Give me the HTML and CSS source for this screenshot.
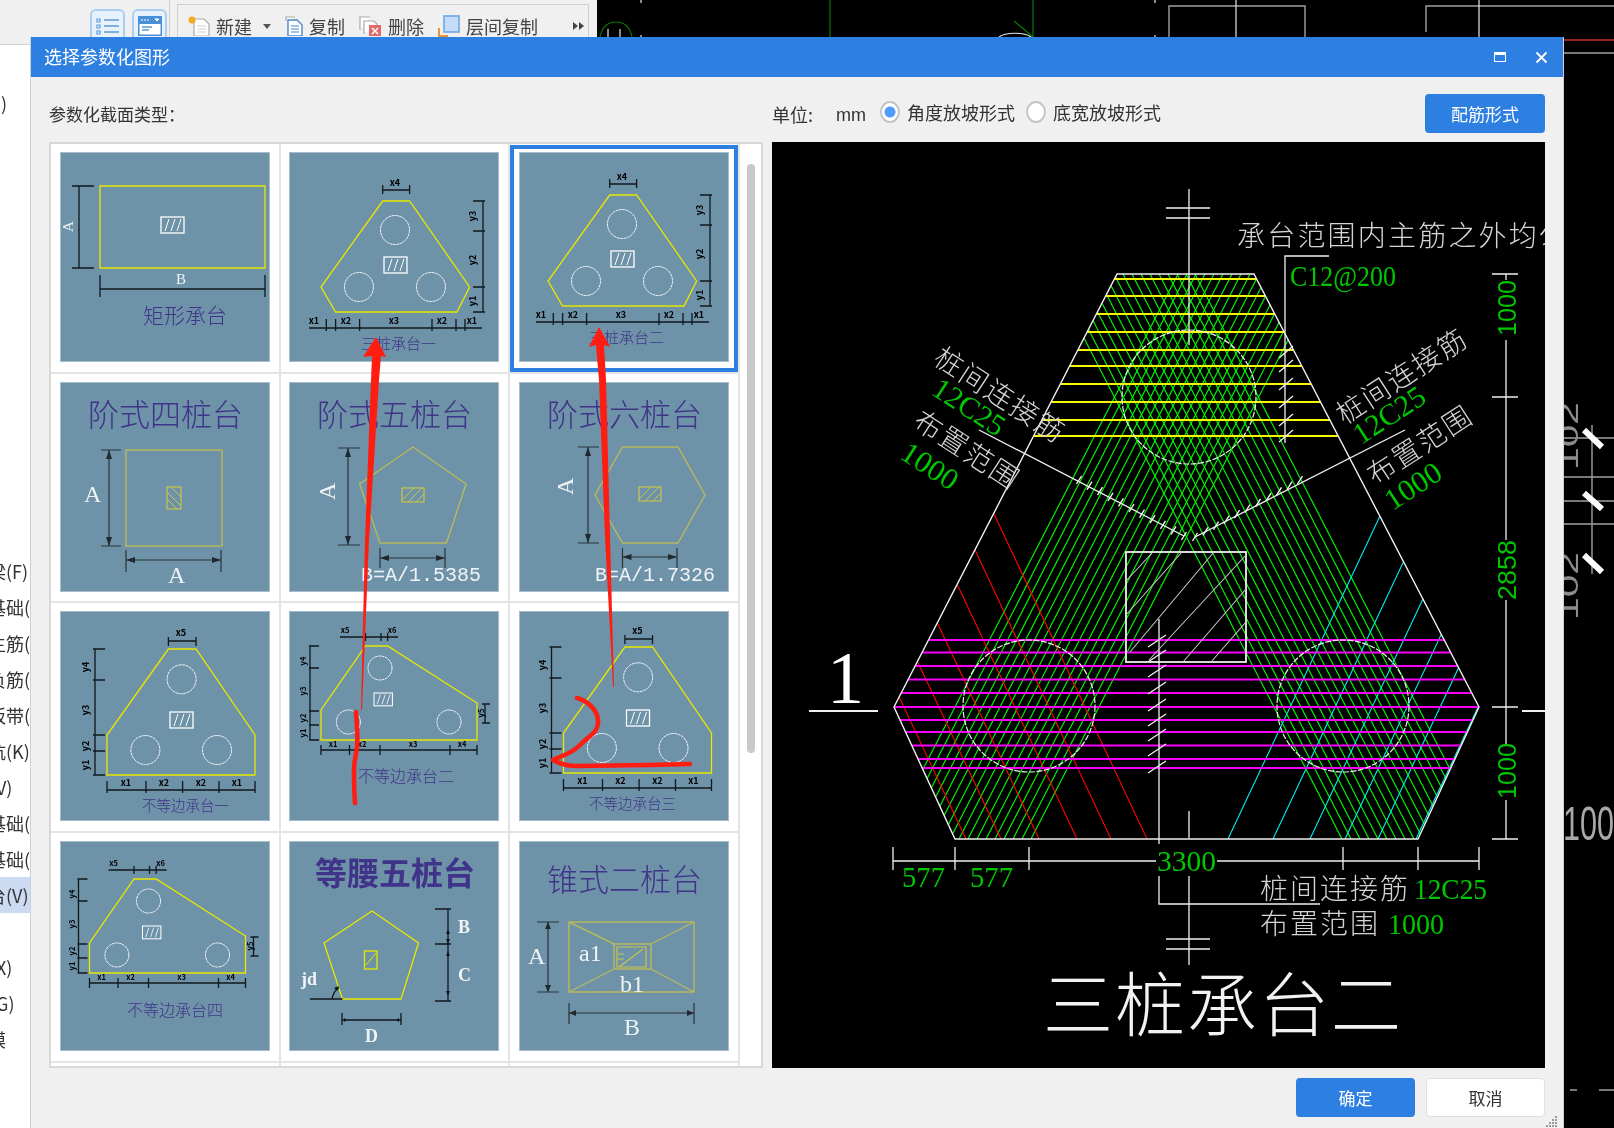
FILE: index.html
```html
<!DOCTYPE html>
<html lang="zh-CN">
  <head>
    <meta charset="UTF-8" />
    <title>选择参数化图形</title>
    <link rel="stylesheet" href="styles.css">
  </head>
  <body>
    <!-- shared parts of the section thumbnails -->
    <svg class="defs" width="0" height="0">
      <defs>
        <g id="hb">
          <rect class="hb" width="23" height="16" />
          <path class="hb-l" d="M4 14l4-12M10 14l4-12M16 14l4-12" />
        </g>
        <g id="tri-a">
          <path class="yl" d="M93.7 49H120.6L180.6 135 168 160H46.6L32 135Z" />
          <circle class="ci" cx="106" cy="78" r="14.5" />
          <circle class="ci" cx="70" cy="135" r="14.5" />
          <circle class="ci" cx="142" cy="135" r="14.5" />
          <use href="#hb" x="95" y="105" />
          <path class="ln" d="M93.7 33v9M120.6 33v9M93.7 38H120.6" />
          <path class="ln" d="M194 49V160M184 49h12M184 79h12M184 135h12M184 160h12" />
          <path class="ln" d="M20 176H193M37.3 167v12M46.6 167v12M70.6 167v12M143 167v12M167 167v12M176 167v12" />
          <text class="sm" x="106" y="34">x4</text>
          <text class="sm" x="25" y="172">x1</text>
          <text class="sm" x="57" y="172">x2</text>
          <text class="sm" x="105" y="172">x3</text>
          <text class="sm" x="153" y="172">x2</text>
          <text class="sm" x="183" y="172">x1</text>
          <text class="sm" x="187" y="64" transform="rotate(-90 187 64)">y3</text>
          <text class="sm" x="187" y="108" transform="rotate(-90 187 108)">y2</text>
          <text class="sm" x="187" y="149" transform="rotate(-90 187 149)">y1</text>
        </g>
        <g id="tri-b">
          <path class="yl" d="M108.4 38H136L195 124V164H47V124Z" />
          <circle class="ci" cx="121.6" cy="68.3" r="14.5" />
          <circle class="ci" cx="85.4" cy="139" r="14.5" />
          <circle class="ci" cx="157" cy="139" r="14.5" />
          <use href="#hb" x="110" y="101" />
          <path class="ln" d="M108.4 26v9M136 26v9M108.4 30H136" />
          <path class="ln" d="M35 38V164M33 38h12M33 69h12M33 124h12M33 140h12M33 164h12" />
          <path class="ln" d="M47 179H195M47 170v12M86 170v12M122.6 170v12M159 170v12M195 170v12" />
          <text class="sm" x="121" y="25">x5</text>
          <text class="sm" x="66" y="175">x1</text>
          <text class="sm" x="104" y="175">x2</text>
          <text class="sm" x="141" y="175">x2</text>
          <text class="sm" x="177" y="175">x1</text>
          <text class="sm" x="29" y="56" transform="rotate(-90 29 56)">y4</text>
          <text class="sm" x="29" y="99" transform="rotate(-90 29 99)">y3</text>
          <text class="sm" x="29" y="135" transform="rotate(-90 29 135)">y2</text>
          <text class="sm" x="29" y="154" transform="rotate(-90 29 154)">y1</text>
        </g>
        <g id="tri-c">
          <path class="yl" d="M76.5 35H98.6L188 92V129H32V99Z" />
          <circle class="ci" cx="91" cy="57" r="12" />
          <circle class="ci" cx="59.4" cy="111" r="12" />
          <circle class="ci" cx="160" cy="111" r="12" />
          <use href="#hb" transform="translate(85 82) scale(.8)" />
          <path class="ln" d="M51 26H109M76.5 22v8M92 22v8M98.6 22v8" />
          <path class="ln" d="M21 35V129M20 35h10M20 57h10M20 100h10M20 114h10M20 129h10" />
          <path class="ln" d="M32 139H188M32 134v10M60.5 134v10M91 134v10M161 134v10M188 134v10" />
          <path class="ln" d="M196 93V112M193 93h8M193 112h8" />
          <text class="xs" x="56" y="22">x5</text>
          <text class="xs" x="103" y="22">x6</text>
          <text class="xs" x="44" y="136">x1</text>
          <text class="xs" x="73" y="136">x2</text>
          <text class="xs" x="124" y="136">x3</text>
          <text class="xs" x="173" y="136">x4</text>
          <text class="xs" x="17" y="50" transform="rotate(-90 17 50)">y4</text>
          <text class="xs" x="17" y="80" transform="rotate(-90 17 80)">y3</text>
          <text class="xs" x="17" y="107" transform="rotate(-90 17 107)">y2</text>
          <text class="xs" x="17" y="122" transform="rotate(-90 17 122)">y1</text>
          <text class="xs" x="195" y="102" transform="rotate(-90 195 102)">y5</text>
        </g>
      </defs>
    </svg>

    <div class="app">
      <aside class="left">
        <div class="tools">
          <div class="tools-a">
            <span class="tbtn">
              <svg width="24" height="18" viewBox="0 0 24 18">
                <path class="ti-b" d="M1 2h3v3H1zM1 8h3v3H1zM1 14h3v3H1z" />
                <path class="ti-l" d="M8 3h15M8 9h15M8 15h15" />
              </svg>
            </span>
            <span class="tbtn">
              <svg width="24" height="20" viewBox="0 0 24 20">
                <rect class="ti-f" width="24" height="20" />
                <rect x="1.5" y="8" width="21" height="10.5" fill="#fff" />
                <path class="ti-w" d="M3 4h2M6 4h2M9 4h2M17 3h4l-2 2z" />
                <path class="ti-l" d="M4 11h10M4 14h7" />
              </svg>
            </span>
          </div>
          <div class="tools-b">
            <span class="tool">
              <svg width="22" height="20" viewBox="0 0 22 20">
                <path class="d-g" d="M6 3h10l5 5v12H6z" />
                <path class="d-l" d="M9 10h9M9 13h9M9 16h9" />
                <circle cx="4" cy="4" r="3.5" fill="#f5a623" />
              </svg>
              <span>新建</span>
              <i class="caret"></i>
            </span>
            <span class="tool">
              <svg width="18" height="20" viewBox="0 0 18 20">
                <path class="d-g" d="M1 5V1h9" />
                <path class="d-b" d="M3 4h9l5 5v11H3z" />
                <path class="d-bl" d="M6 10h8M6 13h8M6 16h8" />
              </svg>
              <span>复制</span>
            </span>
            <span class="tool">
              <svg width="23" height="20" viewBox="0 0 23 20">
                <path class="d-g" d="M1 14V1h10" />
                <path class="d-g" d="M5 18V5h10l3 3v2" />
                <rect x="10" y="9" width="12" height="11" fill="#e46a6a" />
                <path class="d-x" d="M13 12l6 6M19 12l-6 6" />
              </svg>
              <span>删除</span>
            </span>
            <span class="tool">
              <svg width="22" height="22" viewBox="0 0 22 22">
                <path class="d-o" d="M1 13v8h9" />
                <rect class="d-s" x="6" y="1" width="15" height="16" />
              </svg>
              <span>层间复制</span>
            </span>
            <svg class="more" width="11" height="8" viewBox="0 0 11 8"><path d="M0 0l5 4-5 4zM6 0l5 4-5 4z" /></svg>
          </div>
        </div>
        <ul class="nav">
          <li class="short lone">)</li>
          <li>梁(F)</li>
          <li>基础(</li>
          <li>主筋(</li>
          <li>负筋(</li>
          <li>板带(</li>
          <li>抗(K)</li>
          <li class="short">V)</li>
          <li>基础(</li>
          <li>基础(</li>
          <li class="sel">台(V)</li>
          <li class="short blank"></li>
          <li class="short">X)</li>
          <li class="short">G)</li>
          <li>膜</li>
        </ul>
      </aside>

      <!-- CAD model space behind the dialog -->
      <svg class="cad" viewBox="597 0 1017 1128">
        <path class="cad-gr" d="M830 0V37M1033 0V37M1014 21L1033 37" />
        <path class="cad-gr" d="M600 37C602 27 608 22 616 22S630 27 632 37" />
        <path class="cad-w" d="M608 29V37M620 29V37M999 37C1005 32 1025 32 1031 37M641 0V3M641 35V37M1155 0V3M1155 35V37" />
        <path class="cad-g" d="M1169 37V6H1305V37M1426 32V6H1614" />
        <path class="cad-w" d="M1236 0V37M1479 0V37" />
        <path class="cad-r" d="M1564 40H1614" />
        <path class="cad-g" d="M1564 53H1614M1564 438H1614M1564 477H1614M1564 501H1614M1564 524H1614M1592 425V574M1570 1090H1577M1599 1090H1614" />
        <path class="cad-t" d="M1584 430L1602 447M1584 493L1602 509M1584 555L1602 572" />
        <text class="cad-n" x="1578" y="470" transform="rotate(-90 1578 470)" textLength="68" lengthAdjust="spacingAndGlyphs">102</text>
        <text class="cad-n" x="1578" y="620" transform="rotate(-90 1578 620)" textLength="68" lengthAdjust="spacingAndGlyphs">102</text>
        <text class="cad-big" x="1563" y="840" textLength="51" lengthAdjust="spacingAndGlyphs">100</text>
      </svg>

      <section class="dialog">
        <header class="dlg-head">
          <span class="dlg-title">选择参数化图形</span>
          <span class="dlg-btns">
            <i class="ico-max"></i>
            <svg width="13" height="13" viewBox="0 0 13 13"><path class="ico-x" d="M1.5 1.5l10 10M11.5 1.5l-10 10" /></svg>
          </span>
        </header>
        <div class="dlg-body">
          <div class="lbl">参数化截面类型：</div>
          <div class="opts">
            <span class="unit">单位:</span>
            <span class="mm">mm</span>
            <label class="opt"><i class="radio on"></i>角度放坡形式</label>
            <label class="opt"><i class="radio"></i>底宽放坡形式</label>
            <button class="btn blue wide">配筋形式</button>
          </div>

          <div class="list">
            <div class="cells">
              <div class="cell">
                <svg class="thumb" viewBox="0 0 210 210">
                  <path class="yl" d="M40 34H205V116H40Z" />
                  <use href="#hb" x="101" y="65" />
                  <path class="ln" d="M19 34V116M12 34H34M12 116H34M40 123V145M205 123V145M40 137H205" />
                  <text class="lt s13" x="13" y="80" transform="rotate(-90 13 80)">A</text>
                  <text class="lt s13" x="116" y="132">B</text>
                  <text class="cap" x="83" y="171" font-size="21">矩形承台</text>
                </svg>
              </div>
              <div class="cell">
                <svg class="thumb" viewBox="0 0 210 210">
                  <use href="#tri-a" />
                  <text class="cap" x="72" y="197" font-size="15">三桩承台一</text>
                </svg>
              </div>
              <div class="cell pick">
                <svg class="thumb" viewBox="0 0 210 210">
                  <use href="#tri-a" x="-3" y="-6" />
                  <text class="cap" x="70" y="191" font-size="15">三桩承台二</text>
                </svg>
              </div>

              <div class="cell">
                <svg class="thumb" viewBox="0 0 210 210">
                  <text class="cap" x="28" y="44" font-size="31">阶式四桩台</text>
                  <path class="ol" d="M66 68H162V164H66Z" />
                  <rect class="ol2" x="107" y="105" width="14" height="22" />
                  <path class="hat" d="M107 110l14 14M107 117l10 10M111 105l10 10" />
                  <path class="dk" d="M41 68H61M41 164H61M49 68V164M66 168V190M161 168V190M66 178H161" />
                  <path class="ar" d="M49 68l-3 9h6zM49 164l-3-9h6zM66 178l9-3v6zM161 178l-9-3v6z" />
                  <text class="lt s24" x="24" y="120">A</text>
                  <text class="lt s24" x="108" y="201">A</text>
                </svg>
              </div>
              <div class="cell">
                <svg class="thumb" viewBox="0 0 210 210">
                  <text class="cap" x="28" y="44" font-size="31">阶式五桩台</text>
                  <path class="ol" d="M124 65L177 102 157.5 161H91L70.6 102Z" />
                  <rect class="ol2" x="113" y="106" width="22" height="14" />
                  <path class="hat" d="M113 118l12-12M119 120l14-14M127 120l8-8" />
                  <path class="dk" d="M49 66H71M49 163H71M59 66V163M91 166V186M156 166V186M91 176H156" />
                  <path class="ar" d="M59 66l-3 9h6zM59 163l-3-9h6zM91 176l9-3v6zM156 176l-9-3v6z" />
                  <text class="lt s24" x="46" y="118" transform="rotate(-90 46 118)">A</text>
                  <text class="lt mono" x="72" y="199">B=A/1.5385</text>
                </svg>
              </div>
              <div class="cell">
                <svg class="thumb" viewBox="0 0 210 210">
                  <text class="cap" x="28" y="44" font-size="31">阶式六桩台</text>
                  <path class="ol" d="M103.5 65H159L186 113 159 161H103.5L76 113Z" />
                  <rect class="ol2" x="120" y="105" width="22" height="14" />
                  <path class="hat" d="M120 117l12-12M126 119l14-14M134 119l8-8" />
                  <path class="dk" d="M59 65H80M59 161H80M69 65V161M103.5 166V186M158 166V186M103.5 175H158" />
                  <path class="ar" d="M69 65l-3 9h6zM69 161l-3-9h6zM103.5 175l9-3v6zM158 175l-9-3v6z" />
                  <text class="lt s24" x="54" y="113" transform="rotate(-90 54 113)">A</text>
                  <text class="lt mono" x="76" y="199">B=A/1.7326</text>
                </svg>
              </div>

              <div class="cell">
                <svg class="thumb" viewBox="0 0 210 210">
                  <use href="#tri-b" />
                  <text class="cap" x="82" y="200" font-size="14.5">不等边承台一</text>
                </svg>
              </div>
              <div class="cell">
                <svg class="thumb" viewBox="0 0 210 210">
                  <use href="#tri-c" />
                  <text class="cap" x="69" y="171" font-size="16">不等边承台二</text>
                </svg>
              </div>
              <div class="cell">
                <svg class="thumb" viewBox="0 0 210 210">
                  <use href="#tri-b" x="-2.5" y="-2" />
                  <text class="cap" x="70" y="198" font-size="14.5">不等边承台三</text>
                </svg>
              </div>

              <div class="cell">
                <svg class="thumb" viewBox="0 0 210 210">
                  <use href="#tri-c" x="-2.5" y="3" />
                  <text class="cap" x="67" y="175" font-size="16">不等边承台四</text>
                </svg>
              </div>
              <div class="cell">
                <svg class="thumb" viewBox="0 0 210 210">
                  <text class="cap bold" x="26" y="44" font-size="32">等腰五桩台</text>
                  <path class="yl" d="M83 70L129.5 102 112 158H53.5L35 102Z" />
                  <rect class="yl" x="75.5" y="110" width="12.5" height="18" />
                  <path class="yl-t" d="M77 124l10-12" />
                  <path class="ln" d="M146 68H162M146 103H162M146 160H162M159 68V160M21 158H53.5M53 172V184M112 172V184M53 179H112M43 158C44 152 46 149 50 147" />
                  <path class="ar-k" d="M159 88l-2 5h4zM159 103l-2-5h4zM159 110l-2 5h4zM159 155l-2-5h4zM58 179l-3-2v4zM107 179l3-2v4zM50 145l-5 2 3 3z" />
                  <text class="lt b17" x="169" y="92">B</text>
                  <text class="lt b17" x="169" y="140">C</text>
                  <text class="lt b17" x="12" y="144">jd</text>
                  <text class="lt b17" x="76" y="201">D</text>
                </svg>
              </div>
              <div class="cell">
                <svg class="thumb" viewBox="0 0 210 210">
                  <text class="cap" x="28" y="50" font-size="31">锥式二桩台</text>
                  <path class="ol" d="M50 81H175V151H50ZM95 103H132V128H95ZM50 81L95 103M175 81L132 103M50 151L95 128M175 151L132 128" />
                  <path class="ol2" d="M98 106H127V126H98ZM100 126L124 108M99 113h6M99 118h6" />
                  <path class="dk" d="M18 81H40M18 151H40M29 81V151M50 162V183M175 162V183M50 172H175" />
                  <path class="ar" d="M29 81l-3 7h6zM29 151l-3-7h6zM50 172l7-3v6zM175 172l-7-3v6z" />
                  <text class="lt s24" x="9" y="123">A</text>
                  <text class="lt s24" x="60" y="120">a1</text>
                  <text class="lt s24" x="101" y="151">b1</text>
                  <text class="lt s24" x="105" y="194">B</text>
                </svg>
              </div>
              <div class="cell"></div>
              <div class="cell"></div>
              <div class="cell"></div>
            </div>
            <div class="scroll"><div class="scroll-thumb"></div></div>
          </div>

          <div class="preview">
            <svg class="sheet" width="773" height="926" viewBox="772 142 773 926">
              <defs>
                <clipPath id="hex"><path d="M1117 274H1254L1479 707 1418 839H955L894 707Z" /></clipPath>
              </defs>
              <g clip-path="url(#hex)">
                <path class="p-gr" d="M1178 274l-291 565M1187 274l-291 565M1196 274l-291 565M1205 274l-291 565M1214 274l-291 565M1223 274l-291 565M1232 274l-291 565M1241 274l-291 565M1250 274l-291 565M1259 274l-291 565M1268 274l-291 565M1277 274l-291 565M1286 274l-291 565M1295 274l-291 565M1304 274l-291 565M1313 274l-291 565M1322 274l-291 565" />
                <path class="p-gr" d="M1195 274l291 565M1186 274l291 565M1177 274l291 565M1168 274l291 565M1159 274l291 565M1150 274l291 565M1141 274l291 565M1132 274l291 565M1123 274l291 565M1114 274l291 565M1105 274l291 565M1096 274l291 565M1087 274l291 565M1078 274l291 565M1069 274l291 565M1060 274l291 565M1051 274l291 565" />
                <path class="p-re" d="M966 839l-200-425M1001 839l-200-425M1039 839l-200-425M1077 839l-200-425M1111 839l-200-425M1147 839l-200-425" />
                <path class="p-cy" d="M1228 839l200-425M1273 839l200-425M1310 839l200-425M1345 839l200-425M1378 839l200-425M1416 839l200-425" />
                <path class="p-ye" d="M900 279H1500M900 296H1500M900 314H1500M900 332H1500M900 350H1500M900 366H1500M900 384H1500M900 402H1500M900 420H1500M900 436H1500" />
                <path class="p-ma" d="M880 640H1500M880 652.5H1500M880 666H1500M880 679.5H1500M880 693H1500M880 707H1500M880 720H1500M880 732H1500M880 745.5H1500M880 759H1500M880 768H1500" />
              </g>
              <path class="p-wb" d="M1117 274H1254L1479 707 1418 839H955L894 707Z" />
              <circle class="p-ci" cx="1189" cy="397" r="67" />
              <circle class="p-ci" cx="1029" cy="706" r="66" />
              <circle class="p-ci" cx="1343" cy="706" r="66" />

              <!-- section marks and leaders -->
              <path class="p-w" d="M1189 189V345M1166 208H1210M1166 218H1210M1189 811V838M1189 876V965M1166 939H1210M1166 949H1210" />
              <path class="p-w" d="M1285 443V256H1329M1279 358l14-12M1279 372l14-12M1279 390l14-12M1279 408l14-12M1279 426l14-12M1279 442l14-12" />
              <path class="p-w" d="M1159 619V844M1159 876V904H1320M1148 647l18-12M1148 662l18-12M1148 677l18-12M1148 694l18-12M1148 711l18-12M1148 726l18-12M1148 741l18-12M1148 756l18-12M1148 773l18-12" />
              <path class="p-w" d="M979 430L1184 536M1405 430L1195 537" />
              <path class="p-tk" d="M1076.5 484l5-8M1087 489.6l5-8M1097.5 495.2l5-8M1108 500.8l5-8M1118.5 506.4l5-8M1129 512l5-8M1139.5 517.6l5-8M1150 523.2l5-8M1160.5 528.8l5-8M1171 534.4l5-8M1181.5 540l5-8" />
              <path class="p-tk" d="M1192.5 541l5-8M1203 535.3l5-8M1213.5 529.6l5-8M1224 523.9l5-8M1234.5 518.2l5-8M1245 512.5l5-8M1255.5 506.8l5-8M1266 501.1l5-8M1276.5 495.4l5-8M1287 489.7l5-8M1297.5 484l5-8" />
              <rect class="p-sq" x="1126" y="552" width="120" height="110" />
              <path class="p-gy" d="M1153 552L1126 581M1182 552L1126 615M1214 552L1130 652M1246 555L1149 660M1246 589L1183 662M1246 622L1211 662" />

              <!-- dimensions -->
              <path class="p-w" d="M1506 274V280M1506 340V540M1506 600V744M1506 800V839M1492 274H1518M1492 397H1518M1492 707H1518M1492 839H1518" />
              <path class="p-w" d="M893 861H1156M1217 861H1479M893 847V870M955 847V870M1029 847V870M1343 847V870M1418 847V870M1479 847V870" />
              <path class="p-w2" d="M809 711H878M1522 711H1545" />

              <text class="t-num" x="1290" y="286" textLength="106" lengthAdjust="spacingAndGlyphs">C12@200</text>
              <text class="t-num t-v" x="1516" y="336" transform="rotate(-90 1516 336)" textLength="56" lengthAdjust="spacingAndGlyphs">1000</text>
              <text class="t-num t-v" x="1516" y="600" transform="rotate(-90 1516 600)" textLength="60" lengthAdjust="spacingAndGlyphs">2858</text>
              <text class="t-num t-v" x="1516" y="799" transform="rotate(-90 1516 799)" textLength="56" lengthAdjust="spacingAndGlyphs">1000</text>
              <text class="t-num" x="902" y="887" textLength="43" lengthAdjust="spacingAndGlyphs">577</text>
              <text class="t-num" x="970" y="887" textLength="43" lengthAdjust="spacingAndGlyphs">577</text>
              <text class="t-num" x="1157" y="871" textLength="59" lengthAdjust="spacingAndGlyphs">3300</text>
              <text class="t-num" x="1414" y="899" textLength="73" lengthAdjust="spacingAndGlyphs">12C25</text>
              <text class="t-num" x="1388" y="934" textLength="56" lengthAdjust="spacingAndGlyphs">1000</text>

              <text class="t-cn" x="1237" y="246" textLength="330">承台范围内主筋之外均匀</text>
              <text class="t-cn" x="1260" y="899" textLength="148">桩间连接筋</text>
              <text class="t-cn" x="1260" y="934" textLength="118">布置范围</text>

              <g transform="translate(1000 395) rotate(33)"><text class="t-cn mid wide-cn" y="10">桩间连接筋</text></g>
              <g transform="translate(969 407) rotate(33)"><text class="t-num mid" y="10" textLength="80" lengthAdjust="spacingAndGlyphs">12C25</text></g>
              <g transform="translate(967 450) rotate(33)"><text class="t-cn mid wide-cn" y="10">布置范围</text></g>
              <g transform="translate(930 466) rotate(33)"><text class="t-num mid" y="10" textLength="62" lengthAdjust="spacingAndGlyphs">1000</text></g>
              <g transform="translate(1402 376) rotate(-33)"><text class="t-cn mid wide-cn" y="10">桩间连接筋</text></g>
              <g transform="translate(1389 415) rotate(-33)"><text class="t-num mid" y="10" textLength="80" lengthAdjust="spacingAndGlyphs">12C25</text></g>
              <g transform="translate(1420 445) rotate(-33)"><text class="t-cn mid wide-cn" y="10">布置范围</text></g>
              <g transform="translate(1413 486) rotate(-33)"><text class="t-num mid" y="10" textLength="62" lengthAdjust="spacingAndGlyphs">1000</text></g>

              <text class="t-one" x="827" y="703">1</text>
              <text class="t-big" x="1043" y="1031">三桩承台二</text>
            </svg>
          </div>

          <div class="foot">
            <button class="btn blue">确定</button>
            <button class="btn white">取消</button>
          </div>
        </div>
        <svg class="grip" width="14" height="12" viewBox="0 0 14 12">
          <path d="M10 0h2v2h-2zM7 3h2v2H7zM10 3h2v2h-2zM4 6h2v2H4zM7 6h2v2H7zM10 6h2v2h-2zM1 9h2v2H1zM4 9h2v2H4zM7 9h2v2H7zM10 9h2v2h-2z" />
        </svg>
      </section>

      <!-- hand drawn red marks on top of the screenshot -->
      <svg class="marks" width="1614" height="1128" viewBox="0 0 1614 1128">
        <path class="m-fill" d="M376 337L386 357 381 356 379 380 369 540 362 710H361L365 540 371 380 372 356 363 357Z" />
        <path class="m-fill" d="M599 327L610 347 604 345 606 380 610 537 614 687H613L605 537 599 380 596 345 589 347Z" />
        <path class="m-line" d="M356 712C357 725 358 738 357 747S354 760 354 770 354 790 355 803" />
        <path class="m-line" d="M577 698C585 700 597 708 598 720S590 735 580 745 562 755 553 760C560 764 568 766 577 766S650 765 690 764" />
      </svg>
    </div>
  </body>
</html>
```
FILE: styles.css
```css
html, body {
  margin: 0;
  padding: 0;
  height: 100%;
  overflow: hidden;
}
body {
  font-family: "Noto Sans CJK SC", "Liberation Sans", sans-serif;
  color: #333;
  background: #000;
}
.defs {
  position: absolute;
}
.app {
  position: relative;
  display: flex;
  width: 1614px;
  height: 1128px;
  overflow: hidden;
  filter: blur(.45px);
}

/* left side of the main window */
.left {
  width: 597px;
  background: #fff;
  flex: none;
}
.tools {
  display: flex;
  height: 45px;
  background: #f0f0f0;
  border-bottom: 1px solid #d4d4d4;
  box-sizing: border-box;
}
.tools-a {
  display: flex;
  gap: 7px;
  width: 170px;
  padding: 9px 0 0 90px;
  box-sizing: border-box;
  border-right: 1px solid #d0d0d0;
}
.tbtn {
  display: flex;
  align-items: center;
  justify-content: center;
  width: 35px;
  height: 34px;
  background: #e8f2fc;
  border: 2px solid #a9cff2;
  border-radius: 6px;
  box-sizing: border-box;
}
.ti-b { fill: none; stroke: #5a9bd8; stroke-width: 1.2; }
.ti-l { fill: none; stroke: #5a9bd8; stroke-width: 1.6; }
.ti-f { fill: #4a90d9; }
.ti-w { fill: #fff; stroke: #fff; stroke-width: 1; }
.tools-b {
  display: flex;
  align-items: center;
  gap: 14px;
  width: 412px;
  margin-left: 7px;
  padding: 3px 4px 0 10px;
  box-sizing: border-box;
  border-top: 1px solid #d0d0d0;
  border-left: 1px solid #d0d0d0;
  border-right: 1px solid #d0d0d0;
  margin-top: 4px;
  height: 40px;
}
.tool {
  display: flex;
  align-items: center;
  gap: 6px;
  font-size: 18px;
  color: #444;
  white-space: nowrap;
}
.caret {
  margin-left: 5px;
  border: 4px solid transparent;
  border-top: 5px solid #555;
  border-bottom: 0;
}
.more {
  margin-left: auto;
  fill: #444;
}
.d-g { fill: #fff; stroke: #a9a9a9; stroke-width: 1.2; }
.d-l { stroke: #d0d0d0; stroke-width: 1.2; }
.d-b { fill: #fff; stroke: #4a86c8; stroke-width: 1.4; }
.d-bl { stroke: #4a86c8; stroke-width: 1.2; }
.d-x { stroke: #fff; stroke-width: 1.5; }
.d-o { fill: none; stroke: #ee9236; stroke-width: 2; }
.d-s { fill: #c3dcfa; stroke: #6ea6e6; stroke-width: 1.6; }

.nav {
  list-style: none;
  margin: 0;
  padding: 40px 0 0;
  font-size: 18px;
  line-height: 36px;
}
.nav li {
  height: 36px;
  width: 31px;
  white-space: nowrap;
  overflow: hidden;
  text-indent: -12px;
}
.nav li.short {
  text-indent: -4px;
}
.nav li.lone {
  margin-bottom: 432px;
  text-indent: 1px;
}
.nav li.sel {
  background: #ccdaf2;
}

/* drawing behind the dialog */
.cad {
  flex: 1;
  height: 1128px;
  background: #000;
}
.cad-gr { fill: none; stroke: #0a7a0a; stroke-width: 1.2; }
.cad-w { fill: none; stroke: #e6e6e6; stroke-width: 1.2; }
.cad-g { fill: none; stroke: #a0a0a0; stroke-width: 1.4; }
.cad-r { stroke: #c03030; stroke-width: 1.5; }
.cad-t { stroke: #fff; stroke-width: 6; }
.cad-n {
  font: 28px "Liberation Sans", sans-serif;
  fill: #8c8c8c;
}
.cad-big {
  font: 48px "Liberation Sans", sans-serif;
  fill: #a8a8a8;
}

/* dialog */
.dialog {
  position: absolute;
  left: 31px;
  top: 37px;
  width: 1532px;
  height: 1091px;
  background: #f0f0f0;
  box-shadow: -1px 0 0 #c8d2de, 1px 0 0 #c8d2de;
}
.dlg-head {
  display: flex;
  align-items: center;
  justify-content: space-between;
  height: 40px;
  padding: 0 15px 0 13px;
  background: #2e7fe2;
  color: #fff;
  font-size: 18px;
}
.dlg-title {
  margin-bottom: 3px;
}
.dlg-btns {
  display: flex;
  align-items: center;
  gap: 29px;
}
.ico-max {
  display: block;
  width: 12px;
  height: 10px;
  box-sizing: border-box;
  border: 1.5px solid #fff;
  border-top-width: 3px;
}
.ico-x {
  fill: none;
  stroke: #fff;
  stroke-width: 1.8;
}
.dlg-body {
  display: grid;
  grid-template-columns: 714px 773px;
  grid-template-rows: 48px 926px 39px;
  column-gap: 9px;
  padding: 17px 18px 0;
}
.lbl {
  height: 39px;
  line-height: 39px;
  font-size: 17px;
  color: #333;
}
.opts {
  display: flex;
  align-items: center;
  height: 39px;
  font-size: 18px;
}
.unit {
  width: 64px;
}
.mm {
  width: 44px;
  padding-top: 3px;
  font-family: "Liberation Sans", sans-serif;
}
.opt {
  display: flex;
  align-items: center;
  gap: 7px;
  margin: 0 11px 4px 0;
}
.radio {
  display: block;
  width: 20px;
  height: 22px;
  box-sizing: border-box;
  border: 2px solid #c4c4c4;
  border-radius: 50%;
  background: #fff;
}
.radio.on {
  background: radial-gradient(circle, #4d9cf5 0 5px, #fff 6px);
}
.btn {
  height: 39px;
  width: 119px;
  padding: 0;
  border: none;
  border-radius: 4px;
  font: 17px "Noto Sans CJK SC", sans-serif;
}
.btn.wide {
  width: 120px;
  margin-left: auto;
}
.btn.blue {
  background: #2e7fe2;
  color: #fff;
}
.btn.white {
  background: #fff;
  color: #333;
  border: 1px solid #e0e0e0;
}

/* section type list */
.list {
  display: flex;
  height: 926px;
  box-sizing: border-box;
  background: #fff;
  border: 2px solid #d8d8d8;
  overflow: hidden;
}
.cells {
  display: grid;
  grid-template-columns: repeat(3, 229.67px);
  grid-auto-rows: 229.67px;
  width: 689px;
  flex: none;
}
.cell {
  position: relative;
  padding: 8px 0 0 8.5px;
  box-sizing: border-box;
  border-right: 2px solid #e4e4e4;
  border-bottom: 2px solid #e4e4e4;
}
.cell.pick::after {
  content: "";
  position: absolute;
  top: 1px;
  left: 0;
  right: 0;
  bottom: 0;
  border: 4px solid #2e7fe2;
}
.scroll {
  flex: 1;
  padding: 20px 6px 0 7px;
  background: #fff;
}
.scroll-thumb {
  height: 589px;
  background: #c9c9c9;
  border-radius: 6px;
}
.thumb {
  display: block;
  width: 210px;
  height: 210px;
  background: #6e92a8;
  outline: 1px solid #a6bccb;
  outline-offset: -1px;
}
.thumb text {
  font-family: "Noto Sans CJK SC", sans-serif;
}
.yl { fill: none; stroke: #e8e800; stroke-width: 1.3; }
.yl-t { fill: none; stroke: #e8e800; stroke-width: 1; }
.ol { fill: none; stroke: #b7b95c; stroke-width: 1.4; }
.ol2 { fill: none; stroke: #c8c54c; stroke-width: 1.2; }
.hat { fill: none; stroke: #c8c54c; stroke-width: 1; }
.ln { fill: none; stroke: #10181c; stroke-width: 1.3; }
.dk { fill: none; stroke: #2a343a; stroke-width: 1.2; }
.ar { fill: #22292e; }
.ar-k { fill: #10181c; }
.ci { fill: none; stroke: #f2f6f8; stroke-width: 1; stroke-dasharray: 3 .6; }
.hb { fill: none; stroke: #fff; stroke-width: 1.3; }
.hb-l { fill: none; stroke: #fff; stroke-width: 1; }
.cap {
  fill: #3f3489;
  font-weight: 300;
}
.cap.bold {
  font-weight: 700;
}
.thumb .sm, .thumb .xs, .thumb .lt {
  font-family: "Liberation Serif", serif;
  fill: #eef3f6;
}
.sm {
  font-size: 9px;
  font-weight: 700;
  text-anchor: middle;
}
.xs {
  font-size: 7.5px;
  font-weight: 700;
  text-anchor: middle;
}
.s13 { font-size: 15px; }
.s24 { font-size: 24px; }
.b17 { font-size: 18px; font-weight: 700; }
.thumb .mono {
  font-family: "Liberation Mono", monospace;
  font-size: 20px;
}

/* preview drawing */
.preview {
  height: 926px;
  background: #000;
  overflow: hidden;
}
.sheet {
  display: block;
}
.p-gr { fill: none; stroke: #00f000; stroke-width: 1.2; }
.p-re { fill: none; stroke: #ff0000; stroke-width: 1.1; }
.p-cy { fill: none; stroke: #00f0f0; stroke-width: 1.1; }
.p-ye { fill: none; stroke: #f8f800; stroke-width: 1.8; }
.p-ma { fill: none; stroke: #f800f8; stroke-width: 1.8; }
.p-wb { fill: none; stroke: #f0f0f0; stroke-width: 1.4; }
.p-w { fill: none; stroke: #f0f0f0; stroke-width: 1.3; }
.p-w2 { fill: none; stroke: #f0f0f0; stroke-width: 2; }
.p-tk { fill: none; stroke: #f4f4f4; stroke-width: 1.4; }
.p-ci { fill: none; stroke: #f0f0f0; stroke-width: 1.2; stroke-dasharray: 6 1.5; }
.p-sq { fill: none; stroke: #f0f0f0; stroke-width: 1.8; }
.p-gy { fill: none; stroke: #c8c8c8; stroke-width: 1.1; }
.t-num {
  font: 30px "Liberation Serif", serif;
  fill: #00c800;
}
.t-v {
  font: 26px "Liberation Sans", sans-serif;
}
.t-cn {
  font: 300 28px "Noto Sans CJK SC", sans-serif;
  fill: #d4d4d4;
}
.wide-cn {
  letter-spacing: 2px;
}
.mid {
  text-anchor: middle;
}
.t-one {
  font: 74px "Liberation Serif", serif;
  fill: #fff;
}
.t-big {
  font: 300 70px "Noto Sans CJK SC", sans-serif;
  letter-spacing: 2px;
  fill: #f2f2f2;
}
.foot {
  display: flex;
  justify-content: flex-end;
  gap: 11px;
  grid-column: 1 / -1;
  margin-top: 10px;
}
.grip {
  position: absolute;
  right: 4px;
  bottom: 0;
  fill: #9a9a9a;
}

/* red pen on top */
.marks {
  position: absolute;
  left: 0;
  top: 0;
  pointer-events: none;
}
.m-fill { fill: #ff1c10; }
.m-line {
  fill: none;
  stroke: #ff1c10;
  stroke-width: 4.5;
  stroke-linecap: round;
  stroke-linejoin: round;
}
```
